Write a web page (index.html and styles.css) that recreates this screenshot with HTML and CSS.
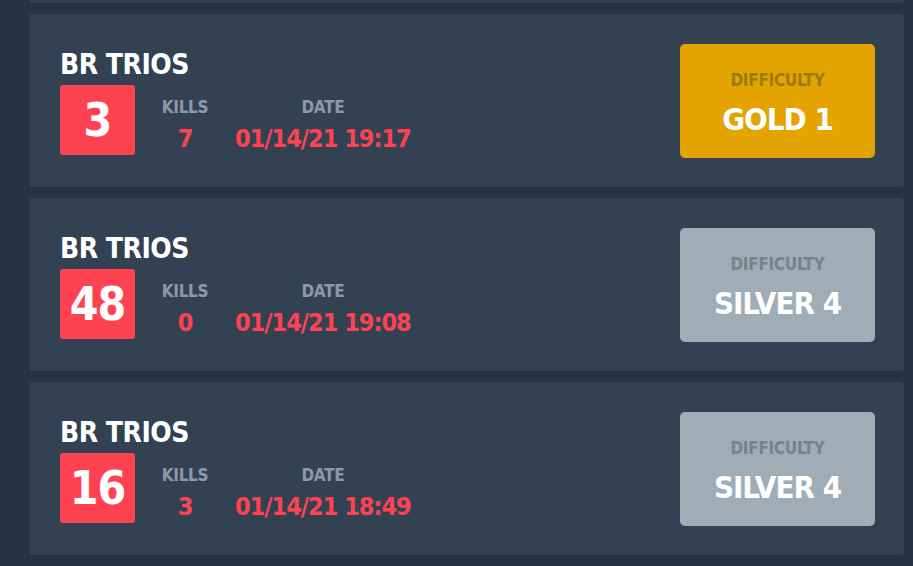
FILE: index.html
```html
<!DOCTYPE html>
<html lang="en">
<head>
  <meta charset="UTF-8" />
  <meta name="viewport" content="width=device-width, initial-scale=1.0"/>
  <title>Match History</title>
  <link rel="stylesheet" href="styles.css">
</head>
<body>
  <div class="match-list">
    <div class="match scrolled"></div>

    <div class="match">
      <div class="match-info">
        <div class="mode">BR TRIOS</div>
        <div class="match-row">
          <div class="place">3</div>
          <div class="stat kills"><span class="label">KILLS</span><span class="value">7</span></div>
          <div class="stat"><span class="label">DATE</span><span class="value">01/14/21 19:17</span></div>
        </div>
      </div>
      <div class="difficulty gold"><span class="label">DIFFICULTY</span><span class="rank">GOLD 1</span></div>
    </div>

    <div class="match">
      <div class="match-info">
        <div class="mode">BR TRIOS</div>
        <div class="match-row">
          <div class="place">48</div>
          <div class="stat kills"><span class="label">KILLS</span><span class="value">0</span></div>
          <div class="stat"><span class="label">DATE</span><span class="value">01/14/21 19:08</span></div>
        </div>
      </div>
      <div class="difficulty silver"><span class="label">DIFFICULTY</span><span class="rank">SILVER 4</span></div>
    </div>

    <div class="match">
      <div class="match-info">
        <div class="mode">BR TRIOS</div>
        <div class="match-row">
          <div class="place">16</div>
          <div class="stat kills"><span class="label">KILLS</span><span class="value">3</span></div>
          <div class="stat"><span class="label">DATE</span><span class="value">01/14/21 18:49</span></div>
        </div>
      </div>
      <div class="difficulty silver"><span class="label">DIFFICULTY</span><span class="rank">SILVER 4</span></div>
    </div>
  </div>
</body>
</html>
```

FILE: styles.css
```css
body {
  font-family: 'DejaVu Sans Condensed', 'DejaVu Sans', sans-serif;
  font-weight: bold;
  background: #253445;
  margin: 0;
  height: 566px;
  overflow: hidden;
}

.match-list {
  display: flex;
  flex-direction: column;
  gap: 11px;
  margin: 0 9px 0 29px;
}

.match {
  display: flex;
  justify-content: space-between;
  align-items: center;
  background: #334253;
  border-radius: 4px;
  padding: 30px 29px 29px 31px;
  height: 114px;
}

.match.scrolled {
  height: 3px;
  padding: 0;
  border-radius: 0 0 4px 4px;
}

.match-info {
  display: flex;
  flex-direction: column;
}

.mode {
  color: #fff;
  font-size: 28px;
  line-height: 34px;
  letter-spacing: -0.5px;
  margin-bottom: 3px;
}

.match-row {
  display: flex;
  align-items: center;
  gap: 28px;
}

.place {
  width: 75px;
  height: 70px;
  background: #ff4252;
  color: #fff;
  border-radius: 3px;
  font-size: 46px;
  letter-spacing: -1px;
  display: flex;
  align-items: center;
  justify-content: center;
}

.stat {
  display: flex;
  flex-direction: column;
  align-items: center;
  padding-top: 10px;
}

.stat .label {
  color: #8e99a6;
  font-size: 17px;
  line-height: 20px;
  letter-spacing: -0.3px;
  margin-bottom: 8px;
}

.stat .value {
  color: #ff4252;
  font-size: 25px;
  line-height: 28px;
  letter-spacing: -1px;
}

.kills {
  width: 44px;
}

.difficulty {
  width: 195px;
  height: 114px;
  box-sizing: border-box;
  padding-top: 26px;
  border-radius: 5px;
  display: flex;
  flex-direction: column;
  align-items: center;
}

.difficulty .label {
  font-size: 17px;
  line-height: 20px;
  letter-spacing: -0.3px;
  margin-bottom: 11px;
}

.difficulty .rank {
  color: #fff;
  font-size: 31px;
  line-height: 36px;
  letter-spacing: -1px;
}

.gold {
  background: #e3a400;
}

.gold .label {
  color: #9b7a10;
}

.silver {
  background: #a0adb6;
}

.silver .label {
  color: #76838c;
}
```
